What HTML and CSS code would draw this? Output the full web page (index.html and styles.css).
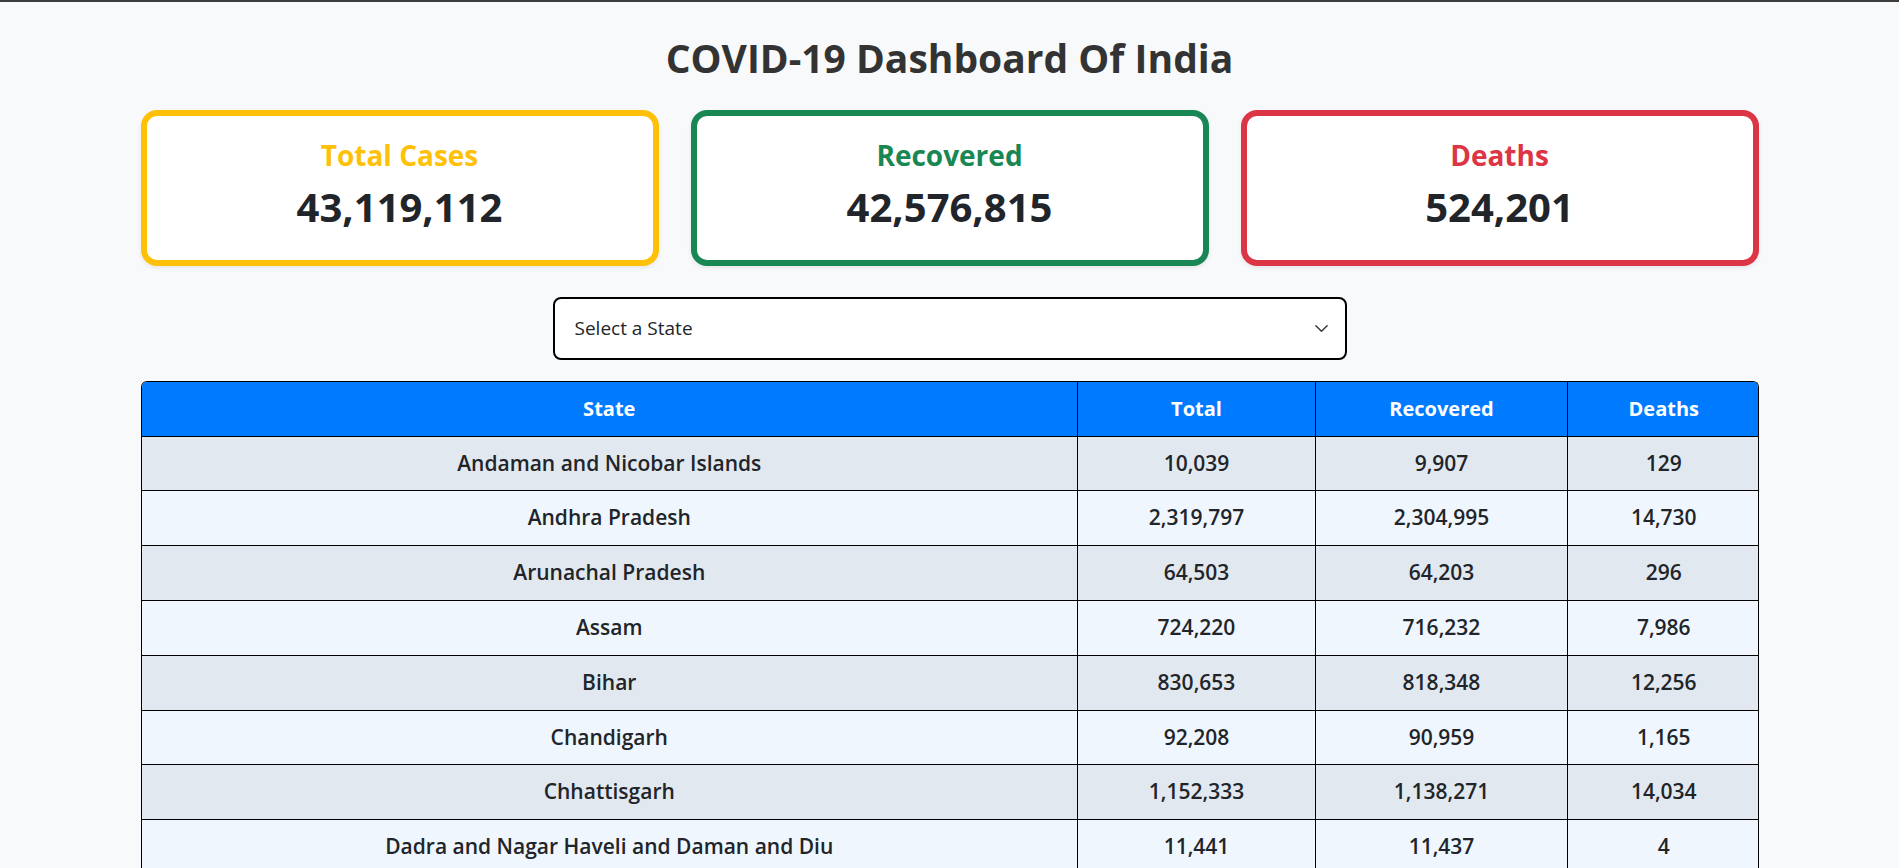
FILE: index.html
```html
<!DOCTYPE html>
<html lang="en">
<head>
<meta charset="utf-8">
<title>COVID-19 Dashboard Of India</title>
<link rel="stylesheet" href="styles.css">
</head>
<body>
<div class="container">
  <h1 class="title">COVID-19 Dashboard Of India</h1>

  <div class="cards">
    <div class="card card-yellow">
      <h3 class="card-label">Total Cases</h3>
      <div class="card-value">43,119,112</div>
    </div>
    <div class="card card-green">
      <h3 class="card-label">Recovered</h3>
      <div class="card-value">42,576,815</div>
    </div>
    <div class="card card-red">
      <h3 class="card-label">Deaths</h3>
      <div class="card-value">524,201</div>
    </div>
  </div>

  <div class="select-row">
    <div class="select-wrap">
      <select class="state-select">
        <option>Select a State</option>
        <option>Andaman and Nicobar Islands</option>
        <option>Andhra Pradesh</option>
        <option>Arunachal Pradesh</option>
        <option>Assam</option>
        <option>Bihar</option>
        <option>Chandigarh</option>
        <option>Chhattisgarh</option>
        <option>Dadra and Nagar Haveli and Daman and Diu</option>
      </select>
      <svg class="chevron" viewBox="0 0 16 16" width="16" height="16" aria-hidden="true">
        <path d="M2 5l6 6 6-6" fill="none" stroke="#343a40" stroke-width="1.6" stroke-linecap="round" stroke-linejoin="round"/>
      </svg>
    </div>
  </div>

  <div class="table-wrap">
    <table class="data-table">
      <colgroup>
        <col class="col-state">
        <col class="col-total">
        <col class="col-recovered">
        <col class="col-deaths">
      </colgroup>
      <thead>
        <tr><th>State</th><th>Total</th><th>Recovered</th><th>Deaths</th></tr>
      </thead>
      <tbody>
        <tr><td>Andaman and Nicobar Islands</td><td>10,039</td><td>9,907</td><td>129</td></tr>
        <tr><td>Andhra Pradesh</td><td>2,319,797</td><td>2,304,995</td><td>14,730</td></tr>
        <tr><td>Arunachal Pradesh</td><td>64,503</td><td>64,203</td><td>296</td></tr>
        <tr><td>Assam</td><td>724,220</td><td>716,232</td><td>7,986</td></tr>
        <tr><td>Bihar</td><td>830,653</td><td>818,348</td><td>12,256</td></tr>
        <tr><td>Chandigarh</td><td>92,208</td><td>90,959</td><td>1,165</td></tr>
        <tr><td>Chhattisgarh</td><td>1,152,333</td><td>1,138,271</td><td>14,034</td></tr>
        <tr><td>Dadra and Nagar Haveli and Daman and Diu</td><td>11,441</td><td>11,437</td><td>4</td></tr>
      </tbody>
    </table>
  </div>
</div>
</body>
</html>
```

FILE: styles.css
```css
html {
  scrollbar-width: none;
}
html::-webkit-scrollbar {
  display: none;
}
* {
  box-sizing: border-box;
}
body {
  margin: 0;
  background: #f8f9fa;
  border-top: 2px solid #3c3c3c;
  font-family: "Open Sans", "Noto Sans", sans-serif;
  color: #212529;
}
.container {
  max-width: 1618px;
  margin: 0 auto;
}
.title {
  margin: 33px 0 28px;
  font-size: 39px;
  line-height: 1.2;
  font-weight: 700;
  color: #333333;
  text-align: center;
}
.cards {
  display: grid;
  grid-template-columns: repeat(3, 1fr);
  gap: 32px;
}
.card {
  height: 156px;
  background: #ffffff;
  border: 6px solid;
  border-radius: 16px;
  box-shadow: 0 2px 4px rgba(0, 0, 0, 0.075);
  text-align: center;
  padding-top: 23px;
}
.card-yellow { border-color: #ffc107; }
.card-green { border-color: #198754; }
.card-red { border-color: #dc3545; }
.card-label {
  margin: 0 0 11px;
  font-size: 28px;
  line-height: 1.2;
  font-weight: 700;
}
.card-yellow .card-label { color: #ffc107; }
.card-green .card-label { color: #198754; }
.card-red .card-label { color: #dc3545; }
.card-value {
  font-size: 40px;
  line-height: 1.2;
  font-weight: 700;
  color: #212529;
}
.select-row {
  display: flex;
  justify-content: center;
  margin-top: 31px;
}
.select-wrap {
  position: relative;
  width: 794px;
}
.state-select {
  display: block;
  width: 100%;
  height: 63px;
  padding: 0 48px 0 20px;
  border: 2px solid #000000;
  border-radius: 8px;
  background: #ffffff;
  font-family: "Open Sans", "Noto Sans", sans-serif;
  font-size: 19px;
  color: #212529;
  appearance: none;
  -webkit-appearance: none;
  outline: none;
}
.chevron {
  position: absolute;
  right: 18px;
  top: 24px;
  width: 15px;
  height: 15px;
  pointer-events: none;
}
.table-wrap {
  margin-top: 21px;
  border-radius: 6px 6px 0 0;
  overflow: hidden;
  border: 1px solid #000000;
  border-bottom: none;
}
.data-table {
  width: 100%;
  table-layout: fixed;
  border-collapse: collapse;
  text-align: center;
}
.col-state { width: 936px; }
.col-total { width: 238px; }
.col-recovered { width: 252px; }
.col-deaths { width: 192px; }
.data-table th,
.data-table td {
  padding: 12px 8px;
  line-height: 29.8px;
  border: 1px solid #000000;
}
.data-table tr > :first-child { border-left: none; }
.data-table tr > :last-child { border-right: none; }
.data-table thead th {
  border-top: none;
  background: #007bff;
  color: #ffffff;
  font-size: 20px;
  font-weight: 700;
}
.data-table td {
  font-size: 21px;
  font-weight: 600;
  color: #212529;
}
.data-table tbody tr:nth-child(odd) td { background: #e2e8f0; }
.data-table tbody tr:nth-child(even) td { background: #eff6fe; }
```
